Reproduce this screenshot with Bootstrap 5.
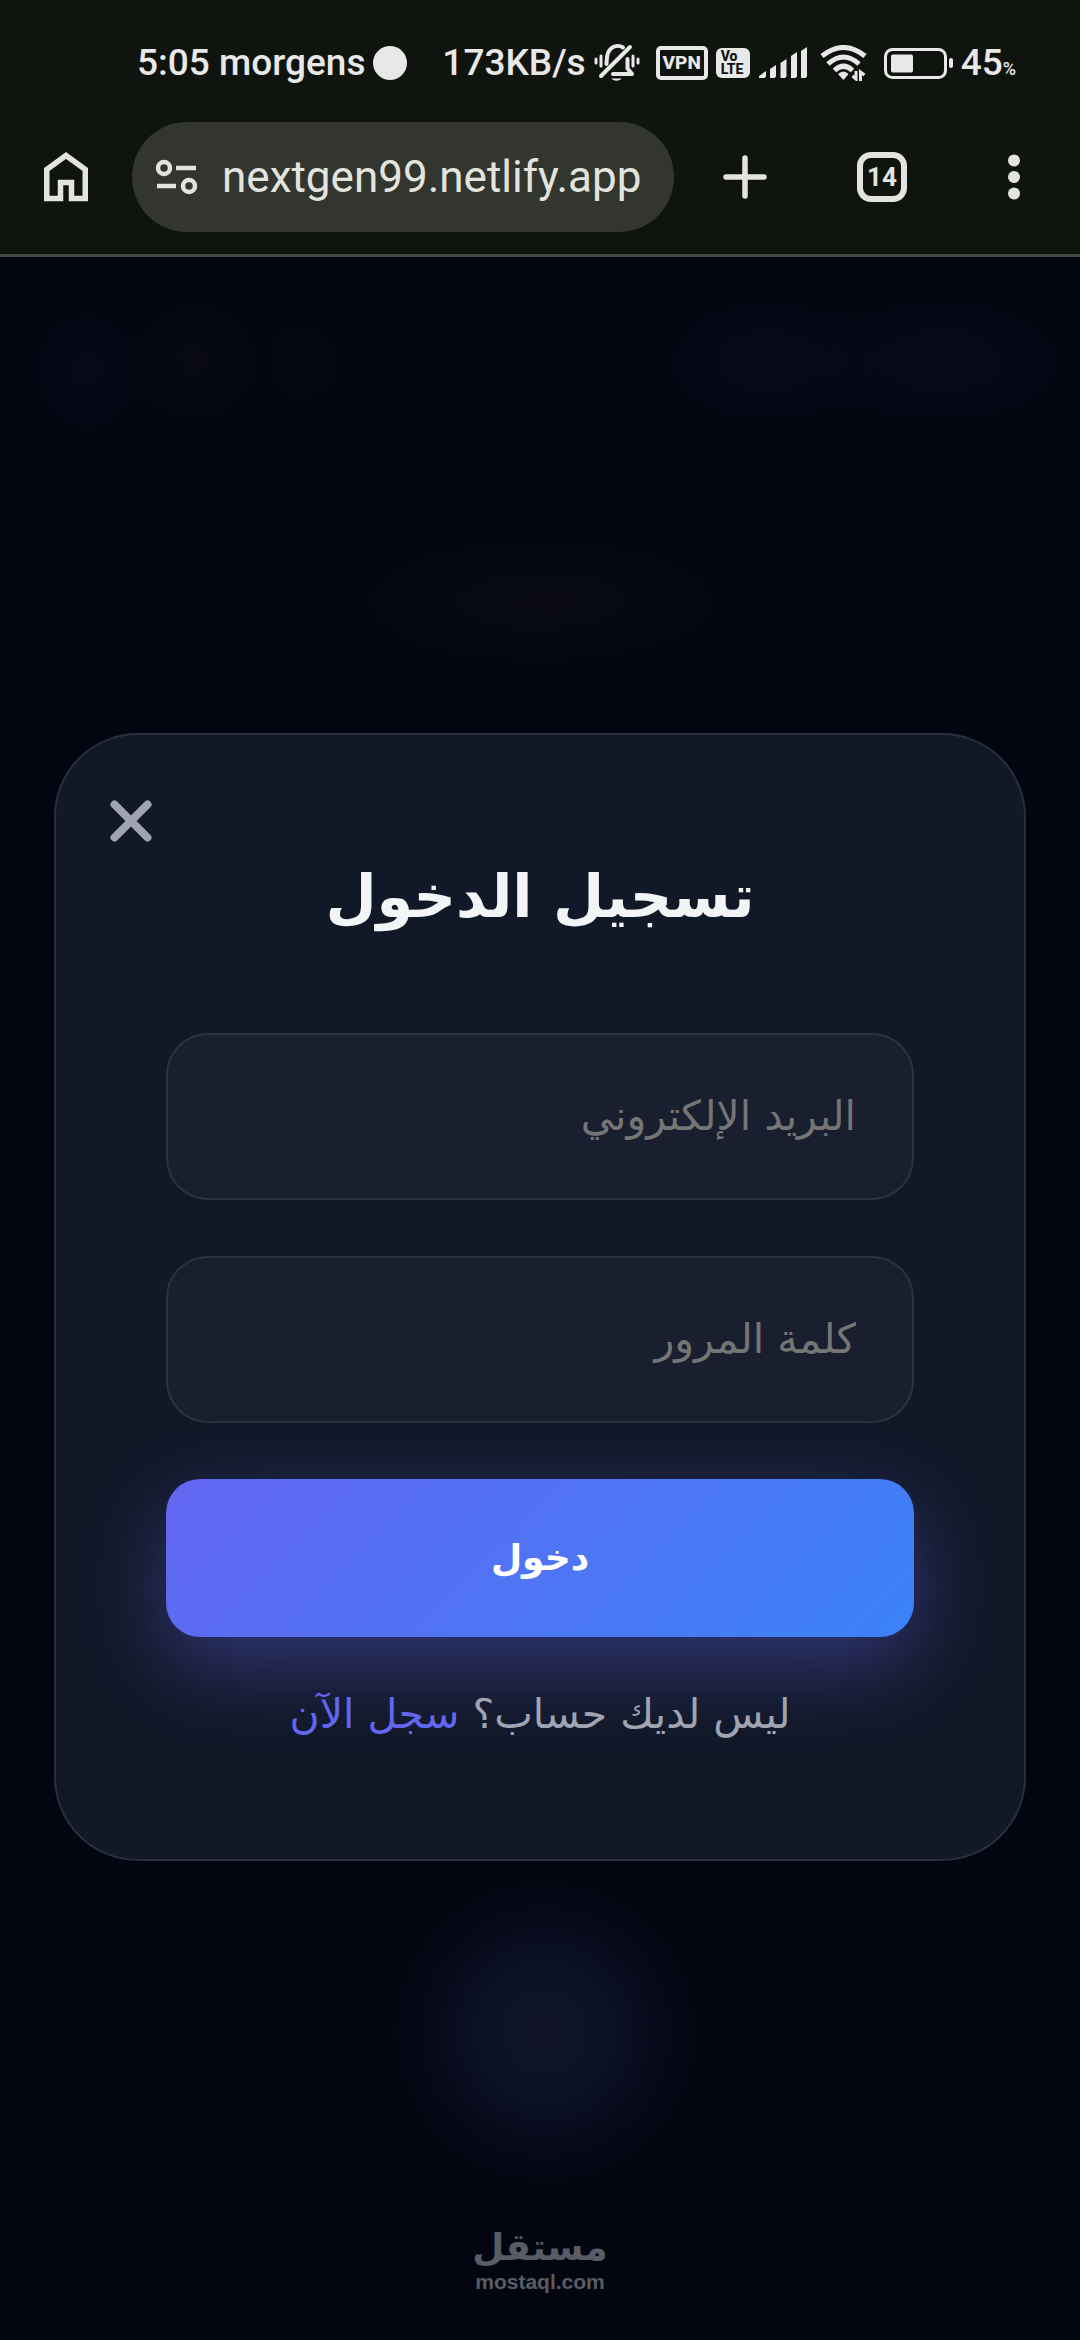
<!DOCTYPE html>
<html lang="ar" dir="rtl">
<head>
<meta charset="utf-8">
<meta name="viewport" content="width=device-width, initial-scale=1">
<title>تسجيل الدخول</title>
<link href="https://cdn.jsdelivr.net/npm/bootstrap@5.3.0/dist/css/bootstrap.min.css" rel="stylesheet">
<style>
  body { background: #030610; font-family: "DejaVu Sans", sans-serif; }
  svg { display: block; flex: none; }
  .chrome { background: #10140f; color: #e3e4df; font-family: Roboto, sans-serif; border-bottom: 3px solid #434742; }
  .status { height: 110px; padding: 16px 64px 0 137px; font-size: 37px; font-weight: 500; line-height: 48px; color: #e8e8e8; }
  .vpn { width: 52px; height: 34px; border: 4px solid; border-radius: 5px; font-size: 19px; font-weight: 800; line-height: 26px; }
  .volte { width: 34px; height: 30px; border-radius: 6px; background: #e8e8e8; color: #10140f; font-size: 14px; font-weight: 800; line-height: 13px; padding: 2px 0 0 5px; }
  .pct { font-size: 18px; line-height: 1; }
  .toolbar { height: 144px; padding-bottom: 10px; }
  .tool { width: 132px; height: 110px; padding: 0; border: 0; color: inherit; flex: none; }
  .tool-wide { width: 142px; }
  .tool:hover { color: #fff; }
  .address { height: 110px; background: #32362f; padding-left: 23px; gap: 23px; min-width: 0; }
  .address input { font-size: 44px; color: #e3e4df; outline: 0; min-width: 0; }
  .tabs { width: 50px; height: 50px; border: 6px solid; border-radius: 14px; font-size: 26px; font-weight: 700; line-height: 38px; }
  .stage {
    padding: 32px 5% 36px;
    background:
      radial-gradient(circle 160px at 50.5% 85.2%, #111527 0, #0c1126 40%, #060a1a 70%, transparent 100%),
      radial-gradient(ellipse 150px 75px at 87% 5%, #070a1b, transparent),
      radial-gradient(ellipse 120px 75px at 71% 5%, #070a1b, transparent),
      radial-gradient(ellipse 70px 80px at 8% 5.5%, #060918, transparent),
      radial-gradient(ellipse 70px 70px at 18% 5%, #080913, transparent),
      radial-gradient(ellipse 60px 65px at 28% 5%, #05080f, transparent),
      radial-gradient(ellipse 200px 70px at 50% 16.5%, #090a14, transparent),
      #030610;
  }
  .login { background: #111827; border: 2px solid #282f3c; border-radius: 84px; padding: 110px; color: #a0a4b2; }
  .dismiss { top: 64px; left: 53px; padding: 0; border: 0; line-height: 0; }
  .heading { font-size: 59px; font-weight: 700; line-height: 104px; margin-bottom: 84px; color: #f3f4f6; }
  .field { height: 167px; margin-bottom: 56px; padding: 0 56px; border: 2px solid #2c3240; border-radius: 42px; font-size: 41px; }
  .field, .field:focus { background: #191f2e; color: #f3f4f6; }
  .field::placeholder { color: #757575; opacity: 1; }
  .submit, .submit:hover { height: 158px; border: 0; border-radius: 34px; font-size: 36px; font-weight: 700; color: #fff; background: linear-gradient(135deg, #6366f1, #3b82f6); box-shadow: 0 28px 84px rgba(99, 102, 241, .4); }
  .signup { margin: 42px 0 0; font-size: 41px; line-height: 70px; }
  .signup a { color: #6366f1; }
  .watermark { bottom: 46px; color: #595b65; font-weight: 700; }
  .watermark-ar { font-size: 37px; line-height: 44px; }
  .watermark-en { font-family: "Liberation Sans", sans-serif; font-size: 21px; line-height: 24px; }
</style>
</head>
<body>
<div class="d-flex flex-column min-vh-100">

  <header class="chrome" dir="ltr">
    <div class="status d-flex align-items-center">
      <span>5:05 morgens</span>
      <svg class="ms-2" width="34" height="34" viewBox="0 0 34 34"><circle cx="17" cy="17" r="17" fill="currentColor"/></svg>
      <span class="ms-auto">173KB/s</span>
      <svg class="ms-2" width="46" height="40" viewBox="0 0 46 40" fill="none" stroke="currentColor" stroke-width="4" stroke-linecap="round" stroke-linejoin="round">
        <path d="M29 4.500C26 2.500 21 2 17 5.500C12 9.500 13 16 12.500 21M19 31H38L33.500 25.500V16M7 33L36 4"/><path d="M17 35.500H28Q22.500 40 17 35.500Z" stroke="none" fill="currentColor"/>
        <path stroke-width="3" d="M2 16V20M7 13V23M44 16V20M39 13V23"/>
      </svg>
      <span class="vpn text-center ms-3">VPN</span>
      <span class="volte ms-2"><span class="d-block">Vo</span><span class="d-block">LTE</span></span>
      <svg class="ms-2" width="50" height="32" viewBox="0 0 50 32" fill="currentColor">
        <path d="M1 31V29L8 24V29.500L6.500 31ZM12 31V22L18 18V29.500L16.500 31ZM22.500 31V16L28.500 12V29.500L27 31ZM33 31V9L39 5V29.500L37.500 31ZM43 31V4L49 0V29.500L47.500 31Z"/>
      </svg>
      <svg class="ms-2 ps-1" width="52" height="36" viewBox="0 0 48 36" fill="none" stroke="currentColor" stroke-width="5">
        <path d="M2 11Q23.500-6 45 11M8 19Q23.500 5 39 19M14.500 25.500Q23.500 17 32.500 25.500"/>
        <path d="M18 29Q23.500 24 28.500 29L23.500 35Z" fill="currentColor" stroke="none"/>
        <path stroke-width="3" d="M36 26V34L32.500 31M40.500 36V27L44.500 30"/>
      </svg>
      <svg class="ms-3" width="69" height="31" viewBox="0 0 69 31" fill="currentColor">
        <rect x="1.500" y="1.500" width="60" height="28" rx="7" fill="none" stroke="currentColor" stroke-width="3"/><rect x="7" y="6.500" width="22" height="18" rx="2"/><rect x="65" y="10" width="4" height="10" rx="2"/>
      </svg>
      <span class="ms-2">45<span class="pct">%</span></span>
    </div>
    <nav class="toolbar d-flex align-items-center">
      <button class="btn tool d-flex align-items-center justify-content-center" type="button" aria-label="Home">
        <svg width="44" height="50" viewBox="0 0 44 50" fill="none" stroke="currentColor" stroke-width="5.500"><path d="M2.750 17.500L22 3.500L41.250 17.500V46.500H27.500V30.500H16.500V46.500H2.750Z"/></svg>
      </button>
      <label class="address d-flex align-items-center flex-grow-1 rounded-pill">
        <svg width="44" height="36" viewBox="0 0 44 36" fill="none" stroke="currentColor" stroke-width="4.500"><circle cx="9" cy="9" r="6"/><circle cx="34" cy="27" r="6"/><path d="M21 9H41M2 27H21"/></svg>
        <input class="bg-transparent border-0 p-0 flex-grow-1" type="text" value="nextgen99.netlify.app" aria-label="Address">
      </label>
      <button class="btn tool tool-wide d-flex align-items-center justify-content-center" type="button" aria-label="New tab">
        <svg width="44" height="44" viewBox="0 0 44 44" stroke="currentColor" stroke-width="5.500" stroke-linecap="round"><path d="M22 3V41M3 22H41"/></svg>
      </button>
      <button class="btn tool d-flex align-items-center justify-content-center" type="button" aria-label="Tabs"><span class="tabs">14</span></button>
      <button class="btn tool d-flex align-items-center justify-content-center" type="button" aria-label="Menu">
        <svg width="12" height="46" viewBox="0 0 12 46" fill="currentColor"><circle cx="6" cy="6.500" r="6"/><circle cx="6" cy="23" r="6"/><circle cx="6" cy="39.500" r="6"/></svg>
      </button>
    </nav>
  </header>

  <main class="stage position-relative flex-grow-1 d-flex align-items-center justify-content-center">
    <form class="login position-relative w-100 text-center">
      <button class="btn dismiss position-absolute" type="button" aria-label="إغلاق">
        <svg width="44" height="44" viewBox="0 0 44 44" stroke="#a0a4b2" stroke-width="8" stroke-linecap="round"><path d="M5.500 5.500L38.500 38.500M38.500 5.500L5.500 38.500"/></svg>
      </button>
      <h1 class="heading">تسجيل الدخول</h1>
      <input class="form-control field" type="email" placeholder="البريد الإلكتروني" aria-label="البريد الإلكتروني">
      <input class="form-control field" type="password" placeholder="كلمة المرور" aria-label="كلمة المرور">
      <button class="btn submit w-100" type="button">دخول</button>
      <p class="signup position-relative">ليس لديك حساب؟ <a class="text-decoration-none" href="#">سجل الآن</a></p>
    </form>
    <div class="watermark position-absolute start-0 end-0 text-center">
      <div class="watermark-ar">مستقل</div>
      <div class="watermark-en" dir="ltr">mostaql.com</div>
    </div>
  </main>
</div>
<script src="https://cdn.jsdelivr.net/npm/bootstrap@5.3.0/dist/js/bootstrap.bundle.min.js"></script>
</body>
</html>
